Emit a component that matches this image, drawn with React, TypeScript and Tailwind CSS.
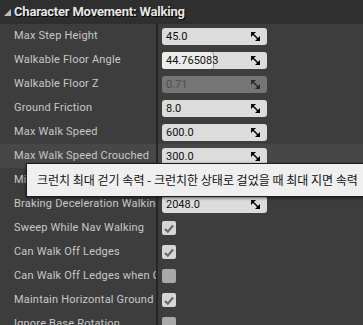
import React from 'react';

type Row =
  | { label: string; kind: 'num'; value: string; disabled?: boolean; fill?: number }
  | { label: string; kind: 'check'; checked: boolean };

const rows: Row[] = [
  { label: 'Max Step Height', kind: 'num', value: '45.0' },
  { label: 'Walkable Floor Angle', kind: 'num', value: '44.765083', fill: 51 },
  { label: 'Walkable Floor Z', kind: 'num', value: '0.71', disabled: true },
  { label: 'Ground Friction', kind: 'num', value: '8.0' },
  { label: 'Max Walk Speed', kind: 'num', value: '600.0' },
  { label: 'Max Walk Speed Crouched', kind: 'num', value: '300.0' },
  { label: 'Min Analog Walk Speed', kind: 'num', value: '0.0' },
  { label: 'Braking Deceleration Walking', kind: 'num', value: '2048.0' },
  { label: 'Sweep While Nav Walking', kind: 'check', checked: true },
  { label: 'Can Walk Off Ledges', kind: 'check', checked: true },
  { label: 'Can Walk Off Ledges when Crouching', kind: 'check', checked: false },
  { label: 'Maintain Horizontal Ground Velocity', kind: 'check', checked: true },
  { label: 'Ignore Base Rotation', kind: 'check', checked: false },
];

// UE spin-box drag handle: two corner wedges along the diagonal
function SpinIcon({ dim }: { dim?: boolean }) {
  return (
    <svg width="9" height="9" viewBox="0 0 9 9" className="shrink-0">
      <g fill={dim ? '#2a2a2a' : '#000'}>
        <path d="M0 0H5L0 5Z" />
        <path d="M9 9V4L4 9Z" />
        <path d="M2 1L8 7L7 8L1 2Z" />
      </g>
    </svg>
  );
}

function NumBox({ value, disabled, fill }: { value: string; disabled?: boolean; fill?: number }) {
  return (
    <div
      className={`relative flex h-[17px] w-[105px] items-center justify-between overflow-hidden rounded-[3px] pl-[4px] pr-[7px] ${
        disabled ? 'bg-[#757575] text-[#4e4e4e]' : 'bg-[#dcdcdc] text-[#111]'
      }`}
    >
      {fill ? (
        <div className="absolute inset-y-0 left-0 rounded-r-[3px] bg-[#ececec] shadow-[1px_0_1px_#9a9a9a]" style={{ width: fill }} />
      ) : null}
      <span className="relative text-[11px] leading-none">{value}</span>
      <span className="relative">
        <SpinIcon dim={disabled} />
      </span>
    </div>
  );
}

function Check({ checked }: { checked: boolean }) {
  return (
    <div
      className={`flex h-[14px] w-[14px] items-center justify-center rounded-[2px] ${
        checked ? 'bg-[#d6d6d6]' : 'bg-[#a9a9a9]'
      }`}
    >
      {checked && (
        <svg width="10" height="9" viewBox="0 0 10 9">
          <path d="M1 5L3.8 7.6L9 1.5" fill="none" stroke="#6a6a6a" strokeWidth="2.2" />
        </svg>
      )}
    </div>
  );
}

export default function App() {
  return (
    <div className="relative h-[325px] w-[363px] overflow-hidden bg-[#3d3d3d] font-['Roboto',sans-serif]">
      {/* Category header */}
      <div className="flex h-6 items-center gap-[3px] bg-[#2f2f2f] pl-[4px]">
        <svg width="7" height="7" viewBox="0 0 7 7">
          <path d="M7 0V7H0Z" fill="#bdbdbd" />
        </svg>
        <span className="text-[13px] font-bold tracking-[-0.2px] text-[#e6e6e6] [text-shadow:1px_1px_1px_#000]">
          Character Movement: Walking
        </span>
      </div>

      {rows.map((r, i) => (
        <div
          key={r.label}
          className={`grid h-6 grid-cols-[158px_1fr] ${i === 5 ? 'bg-[#474747]' : ''}`}
        >
          <div className="flex items-center overflow-hidden whitespace-nowrap border-r-2 border-[#262626] pl-[14px] text-[11px] tracking-[0.2px] text-[#c8c8c8]">
            {r.label}
          </div>
          <div className="flex items-center pl-[4px]">
            {r.kind === 'num' ? (
              <NumBox value={r.value} disabled={r.disabled} fill={r.fill} />
            ) : (
              <Check checked={r.checked} />
            )}
          </div>
        </div>
      ))}

      {/* Tooltip */}
      <div className="absolute left-[26px] top-[163px] flex h-[34px] w-[360px] items-center whitespace-nowrap border-[1.5px] border-[#1c1c1c] bg-[#efefef] pl-[10px] font-['Noto_Sans_CJK_KR',sans-serif] text-[12px] text-[#111] shadow-[0_1px_3px_rgba(0,0,0,0.6)]">
        크런치 최대 걷기 속력 - 크런치한 상태로 걸었을 때 최대 지면 속력
      </div>
    </div>
  );
}
